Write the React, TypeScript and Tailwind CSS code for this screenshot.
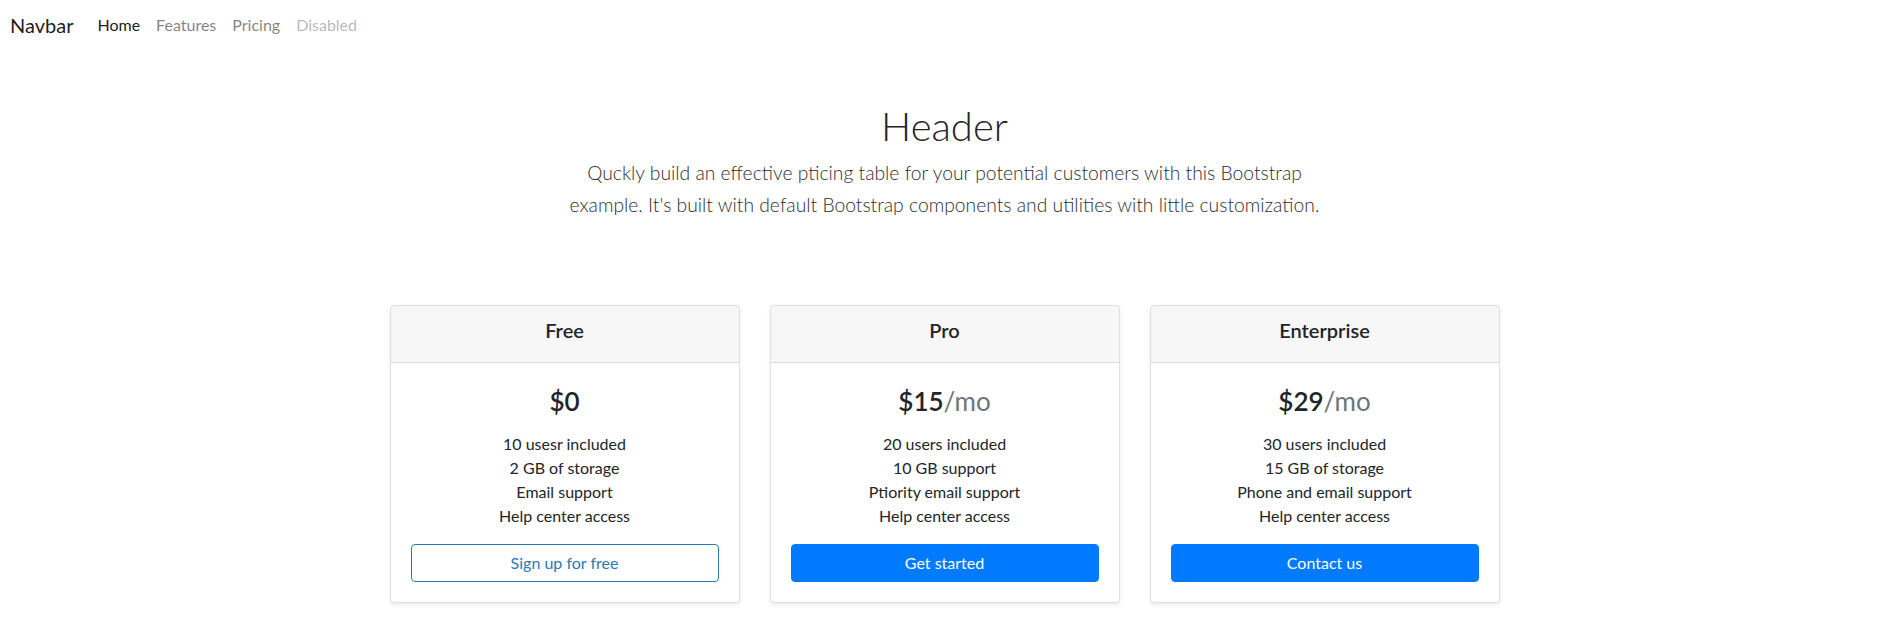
import React from 'react';

const plans = [
  {
    name: 'Free',
    price: '$0',
    per: '',
    features: ['10 usesr included', '2 GB of storage', 'Email support', 'Help center access'],
    cta: 'Sign up for free',
    outline: true,
  },
  {
    name: 'Pro',
    price: '$15',
    per: '/mo',
    features: ['20 users included', '10 GB support', 'Ptiority email support', 'Help center access'],
    cta: 'Get started',
    outline: false,
  },
  {
    name: 'Enterprise',
    price: '$29',
    per: '/mo',
    features: ['30 users included', '15 GB of storage', 'Phone and email support', 'Help center access'],
    cta: 'Contact us',
    outline: false,
  },
];

const App: React.FC = () => {
  return (
    <div className="min-h-screen bg-white text-[#212529] font-['Lato','Segoe_UI',sans-serif]">
      <nav className="flex items-center px-[10px] py-[10px]">
        <a className="text-[20px] leading-[30px] text-[rgba(0,0,0,0.9)] mr-4">Navbar</a>
        <div className="flex items-center text-[16px] leading-[24px]">
          <a className="px-2 text-[rgba(0,0,0,0.9)]">Home</a>
          <a className="px-2 text-[rgba(0,0,0,0.5)]">Features</a>
          <a className="px-2 text-[rgba(0,0,0,0.5)]">Pricing</a>
          <a className="px-2 text-[rgba(0,0,0,0.3)]">Disabled</a>
        </div>
      </nav>

      <div className="pr-[4px]">
        <div className="mx-auto max-w-[760px] pt-[52px] text-center">
          <h1 className="text-[40px] leading-[48px] font-light mb-[7px]">Header</h1>
          <p className="text-[19.3px] leading-[32px] font-light text-[#2b2f33]">
            Quckly build an effective pticing table for your potential customers with this Bootstrap example. It's built with default Bootstrap components and utilities with little customization.
          </p>
        </div>

        <div className="mx-auto mt-[84px] w-[1110px] grid grid-cols-3 gap-[30px]">
          {plans.map((p) => (
            <div
              key={p.name}
              className="bg-white border border-[rgba(0,0,0,0.125)] rounded-[4px] shadow-[0_2px_4px_rgba(0,0,0,0.075)] overflow-hidden text-center"
            >
              <div className="bg-[rgba(0,0,0,0.03)] border-b border-[rgba(0,0,0,0.125)] pt-3 pb-5">
                <h4 className="text-[20px] leading-[24px] font-semibold">{p.name}</h4>
              </div>
              <div className="p-5">
                <h1 className="text-[26px] leading-[36px] font-semibold">
                  {p.price}
                  {p.per && <span className="font-normal text-[#6c757d]">{p.per}</span>}
                </h1>
                <ul className="mt-[13px] mb-4 text-[16px] leading-[24px]">
                  {p.features.map((f) => (
                    <li key={f}>{f}</li>
                  ))}
                </ul>
                <button
                  className={
                    p.outline
                      ? 'w-full rounded-[4px] border border-[#2a7ab8] bg-white py-[6px] text-[16px] leading-[24px] text-[#2a7ab8]'
                      : 'w-full rounded-[4px] border border-[#007bff] bg-[#007bff] py-[6px] text-[16px] leading-[24px] text-white'
                  }
                >
                  {p.cta}
                </button>
              </div>
            </div>
          ))}
        </div>
      </div>
    </div>
  );
};

export default App;
